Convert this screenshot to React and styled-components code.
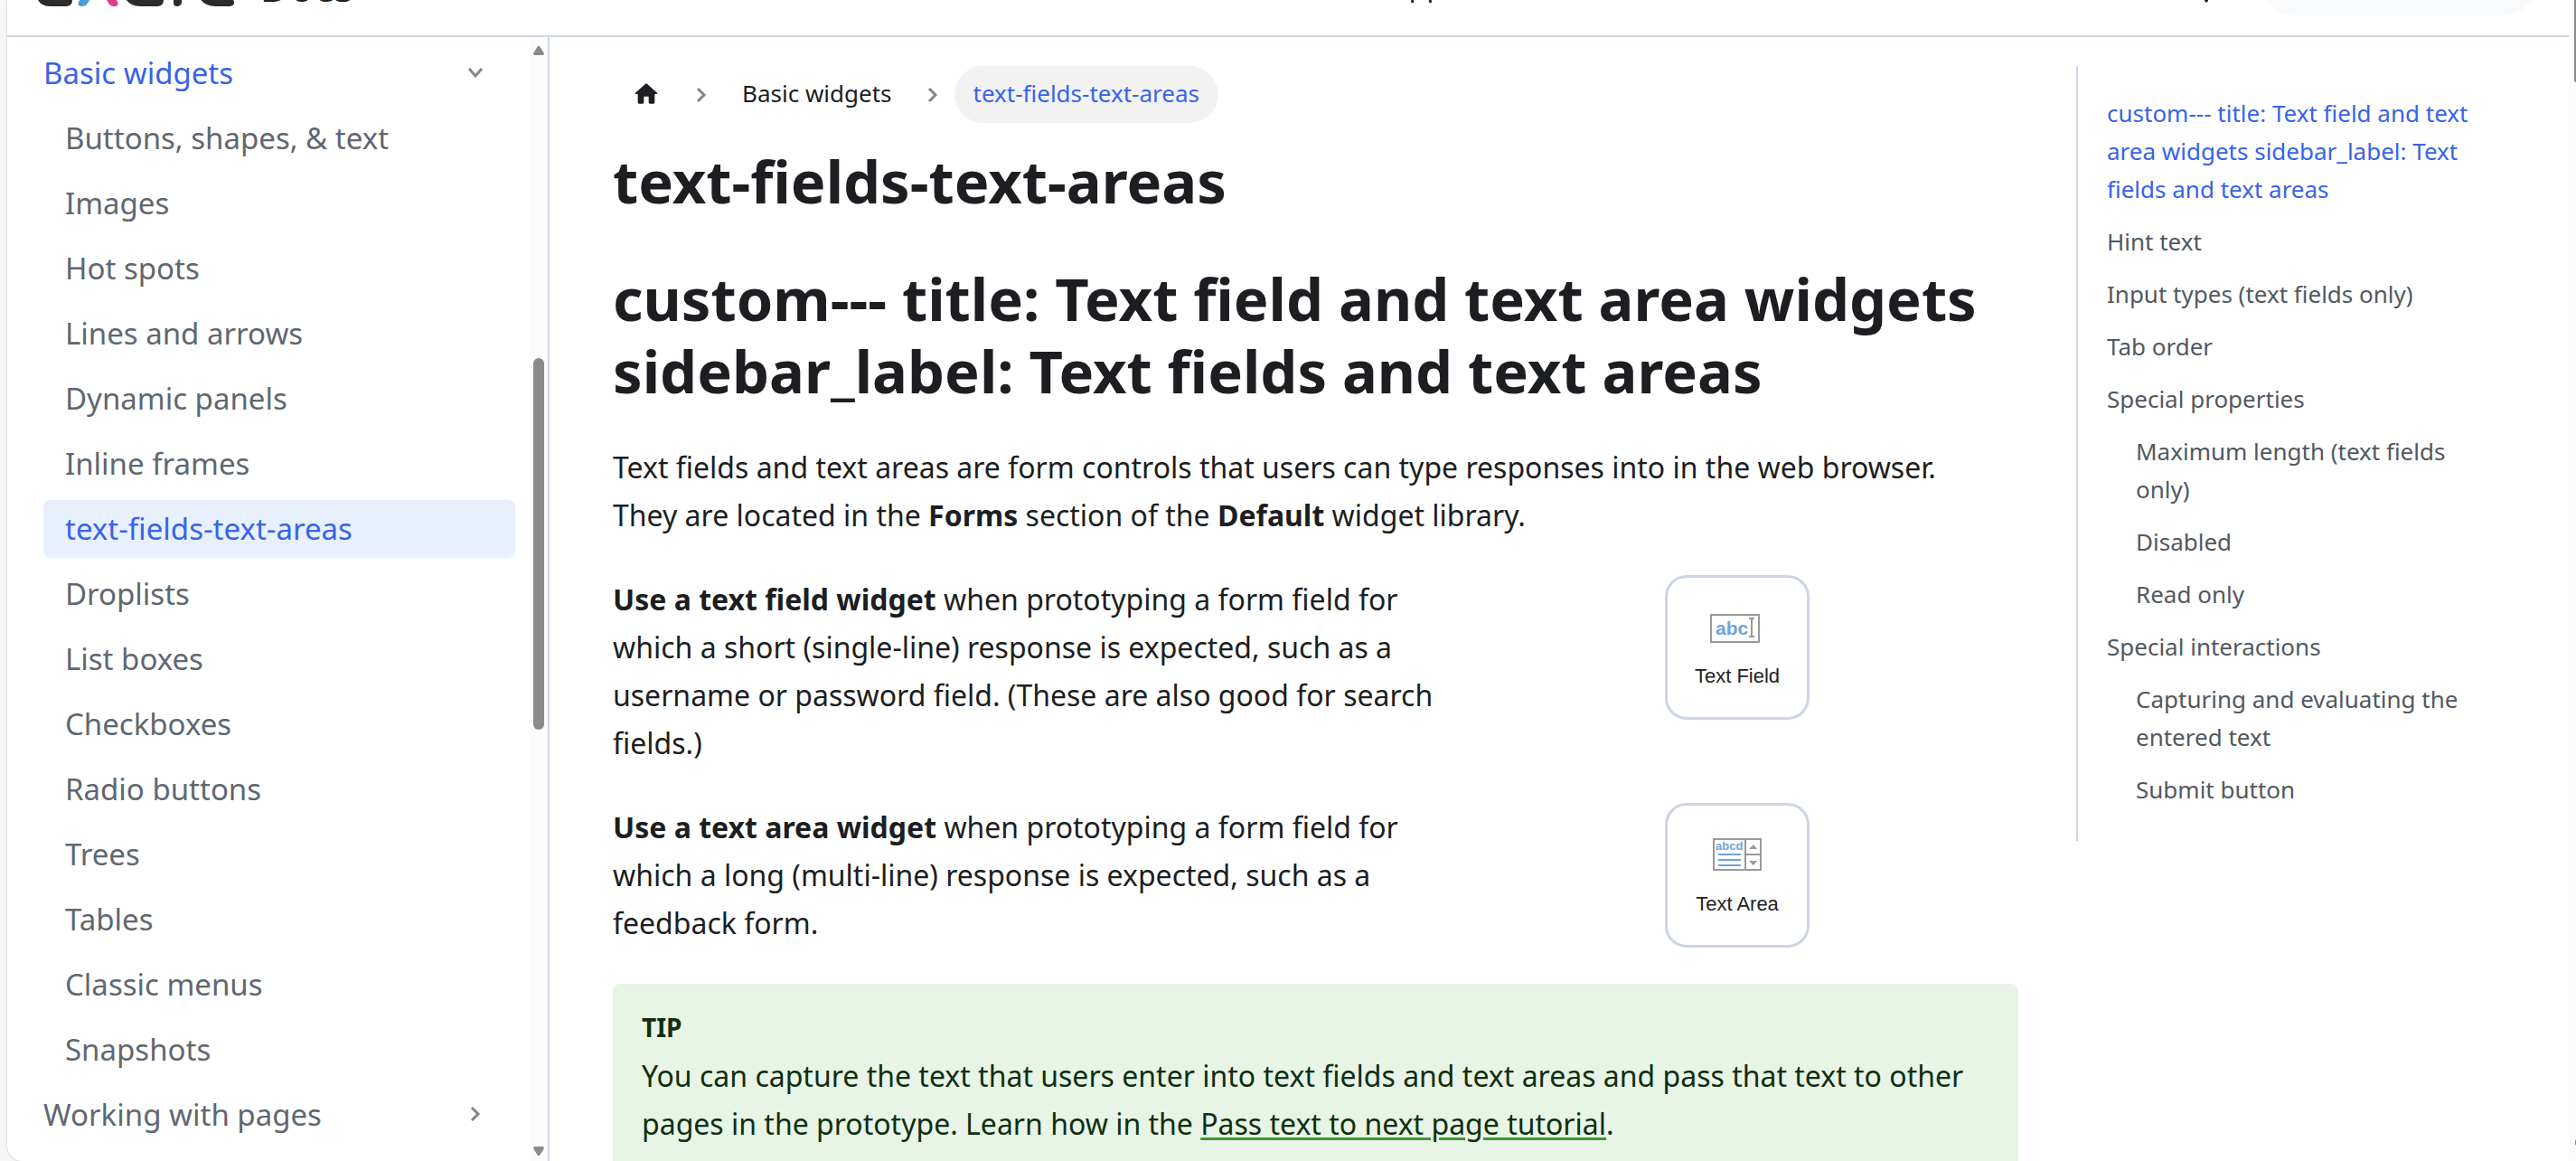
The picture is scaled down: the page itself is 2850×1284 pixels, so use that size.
import React from "react";
import styled, { createGlobalStyle } from "styled-components";

const GlobalStyle = createGlobalStyle`
  * {
    box-sizing: border-box;
  }
  body {
    margin: 0;
    background: #f6f6f7;
    color: #1c1e21;
    font-family: "Noto Sans", "Open Sans", sans-serif;
    font-size: 32px;
    line-height: 53px;
  }
  a {
    color: inherit;
    text-decoration: none;
  }
  h1, p, ul, ol {
    margin: 0;
    padding: 0;
  }
  ul, ol {
    list-style: none;
  }
`;

const Window = styled.div`
  display: flex;
  height: 100vh;
  margin-left: 8px;
  overflow: hidden;
  background: #fff;
  border-bottom-left-radius: 16px;
  box-shadow: 0 0 2px rgba(0, 0, 0, 0.3);
`;

const Page = styled.div`
  flex: 1;
  min-width: 0;
  display: flex;
  flex-direction: column;
`;

const Navbar = styled.header`
  display: flex;
  flex: none;
  align-items: flex-end;
  height: 41px;
  padding: 0 36px 0 32px;
  overflow: hidden;
  border-bottom: 2px solid #cdd5e4;
`;

const Brand = styled.a`
  display: flex;
  align-items: flex-end;
  gap: 26px;
  height: 72px;
  margin-right: 334px;
  padding-bottom: 32px;
`;

const BrandName = styled.span`
  font-size: 44px;
  line-height: 44px;
  font-weight: 600;
`;

const NavLink = styled.a`
  margin-left: auto;
  padding-bottom: 36px;
  line-height: 40px;
`;

const NavTools = styled.div`
  display: flex;
  align-items: flex-end;
  gap: 58px;
  margin-left: auto;
  padding-bottom: 22px;
`;

const IconButton = styled.button`
  display: flex;
  padding: 0 0 14px;
  border: 0;
  background: none;
`;

const Search = styled.input`
  width: 304px;
  height: 72px;
  border: 0;
  border-radius: 36px;
  background: #f8fafc;
`;

const Columns = styled.div`
  flex: 1;
  min-height: 0;
  display: flex;
`;

const Sidebar = styled.nav`
  flex: none;
  display: flex;
  width: 600px;
  border-right: 2px solid #cdd5e4;
`;

const Menu = styled.ul`
  flex: 1;
  display: flex;
  flex-direction: column;
  gap: 8px;
  padding: 8px 16px 8px 40px;
  font-size: 33px;
`;

const MenuItem = styled.li`
  display: flex;
`;

const MenuLink = styled.a`
  flex: 1;
  display: flex;
  align-items: center;
  justify-content: space-between;
  height: 64px;
  padding: 0 33px 2px ${(props) => (props.$sub ? 24 : 0)}px;
  border-radius: 8px;
  color: ${(props) => (props.$active ? "#3763eb" : "#606770")};
  background: ${(props) => (props.$current ? "#e8f0fe" : "transparent")};
`;

const Track = styled.div`
  flex: none;
  display: flex;
  flex-direction: column;
  align-items: center;
  justify-content: space-between;
  width: 20px;
  padding: 10px 0 6px;
  background: #fcfcfc;
`;

const Thumb = styled.div`
  flex: 0 0 411px;
  width: 12px;
  margin-bottom: 126px;
  border-radius: 6px;
  background: #8b8b8b;
`;

const Main = styled.main`
  flex: 1;
  min-width: 0;
  display: flex;
  gap: 64px;
  padding: 32px 0 0 70px;
`;

const Article = styled.article`
  flex: 1;
  min-width: 0;
`;

const Crumbs = styled.ol`
  display: flex;
  align-items: center;
  height: 63px;
  margin-bottom: 24px;
  font-size: 26px;
`;

const Crumb = styled.li`
  display: flex;
  align-items: center;
`;

const CrumbLink = styled.a`
  display: flex;
  align-items: center;
  height: 63px;
  padding: 0 21px 2px;
  border-radius: 32px;
  color: ${(props) => (props.$active ? "#3763eb" : "#1c1e21")};
  background: ${(props) => (props.$active ? "#f2f2f2" : "transparent")};
`;

const Separator = styled.svg`
  width: 12px;
  height: 18px;
  margin: 0 18px;
`;

const Title = styled.h1`
  margin-bottom: ${(props) => (props.$spaced ? 50 : 40)}px;
  font-size: 65px;
  line-height: 80px;
  font-weight: 700;
`;

const Paragraph = styled.p`
  margin-bottom: 40px;
  padding-right: 32px;
`;

const WidgetRow = styled.div`
  display: grid;
  grid-template-columns: 3fr 2fr;
  align-items: start;
  justify-items: start;
  margin-bottom: 40px;
`;

const WidgetCard = styled.figure`
  display: flex;
  flex-direction: column;
  align-items: center;
  justify-self: center;
  gap: 16px;
  width: 160px;
  height: 160px;
  margin: 0;
  padding-top: 32px;
  border: 3px solid #cdd5e4;
  border-radius: 24px;
`;

const CardLabel = styled.figcaption`
  color: #222;
  font-family: "Liberation Sans", Arial, sans-serif;
  font-size: 22px;
  line-height: 42px;
`;

const Tip = styled.aside`
  padding: 22px 32px;
  border-radius: 8px;
  color: #0f2f0f;
  background: #e8f4e6;
`;

const TipTitle = styled.div`
  font-size: 28px;
  font-weight: 700;
`;

const TipLink = styled.a`
  text-decoration: underline 3px #3f962f;
  text-underline-offset: 3px;
`;

const TocColumn = styled.div`
  flex: none;
  width: 545px;
`;

const Toc = styled.ul`
  display: flex;
  flex-direction: column;
  gap: 16px;
  padding: 31px 80px 36px 32px;
  border-left: 2px solid #cdd5e4;
  color: #525860;
  font-size: 26px;
  line-height: 42px;
`;

const TocItem = styled.li`
  padding-left: ${(props) => (props.$sub ? 32 : 0)}px;
  color: ${(props) => (props.$active ? "#3763eb" : "inherit")};
`;

const PageTrack = styled.div`
  flex: none;
  display: flex;
  flex-direction: column;
  justify-content: space-between;
  align-items: flex-end;
  width: 8px;
  background: #fbfbfb;
`;

const PageThumb = styled.div`
  width: 2px;
  height: 91px;
  border-bottom-left-radius: 2px;
  background: #8b8b8b;
`;

const PageArrow = styled.div`
  width: 1px;
  height: 5px;
  margin-bottom: 18px;
  background: #8b8b8b;
`;

const menu = [
  "Buttons, shapes, & text",
  "Images",
  "Hot spots",
  "Lines and arrows",
  "Dynamic panels",
  "Inline frames",
  "text-fields-text-areas",
  "Droplists",
  "List boxes",
  "Checkboxes",
  "Radio buttons",
  "Trees",
  "Tables",
  "Classic menus",
  "Snapshots",
];

const toc = [
  {
    text: "custom--- title: Text field and text area widgets sidebar_label: Text fields and text areas",
    active: true,
  },
  { text: "Hint text" },
  { text: "Input types (text fields only)" },
  { text: "Tab order" },
  { text: "Special properties" },
  { text: "Maximum length (text fields only)", sub: true },
  { text: "Disabled", sub: true },
  { text: "Read only", sub: true },
  { text: "Special interactions" },
  { text: "Capturing and evaluating the entered text", sub: true },
  { text: "Submit button", sub: true },
];

function Logo() {
  return (
    <svg width="222" height="48" viewBox="0 0 222 48" aria-hidden="true">
      <path d="M0 20v16q3 12 15 12h18q7 0 7-7V20z" fill="#2b2b2b" />
      <path d="M47 43l8-13 8-10h10L56 46q-2 2-5 2-6 0-4-5z" fill="#4a9fd9" />
      <path d="M66 20h10l14 23q2 5-4 5-3 0-5-2z" fill="#dd3b8c" />
      <path d="M97 20v16q5 12 18 12h19q7 0 7-7V20z" fill="#2b2b2b" />
      <path d="M152 20v24q0 4 4 4t5-4V20z" fill="#2b2b2b" />
      <path d="M179 20v16q6 12 19 12h15q6 0 6-4 0-4-4-4h-8V20z" fill="#2b2b2b" />
    </svg>
  );
}

function Chevron() {
  return (
    <Separator viewBox="0 0 12 18" fill="none" aria-hidden="true">
      <path d="M2 2l7 7-7 7" stroke="#868686" strokeWidth="3" />
    </Separator>
  );
}

function Arrow({ down }) {
  return (
    <svg width="12" height="10" viewBox="0 0 12 10" aria-hidden="true">
      <path
        d={down ? "M1 0h10l1 2-5 8H5L0 2z" : "M1 10h10l1-2L7 0H5L0 8z"}
        fill="#8b8b8b"
      />
    </svg>
  );
}

function TextFieldIcon() {
  return (
    <svg width="60" height="40" viewBox="0 0 60 40" aria-hidden="true">
      <rect x="1" y="9" width="53" height="30" fill="#fff" stroke="#999" strokeWidth="2" />
      <text x="6" y="31" fill="#6fa3dc" fontFamily="Liberation Sans" fontWeight="700" fontSize="21">
        abc
      </text>
      <path d="M43 13h6M43 33h6M46 13v20" stroke="#999" strokeWidth="2" />
    </svg>
  );
}

function TextAreaIcon() {
  return (
    <svg width="56" height="40" viewBox="0 0 56 40" aria-hidden="true">
      <rect x="2" y="5" width="52" height="34" fill="#fff" stroke="#999" strokeWidth="2" />
      <path d="M37 5v34M37 22h17" stroke="#999" strokeWidth="2" />
      <text x="4" y="17" fill="#6fa3dc" fontFamily="Liberation Sans" fontWeight="700" fontSize="13">
        abcd
      </text>
      <path d="M7 22h25M7 28h25M7 34h25" stroke="#6fa3dc" strokeWidth="2" />
      <path d="M41 16h9l-4-5zM41 29h9l-4 5z" fill="#999" />
    </svg>
  );
}

export default function App() {
  return (
    <>
      <GlobalStyle />
      <Window>
        <Page>
          <Navbar>
            <Brand href="#" aria-label="Axure Docs">
              <Logo />
              <BrandName>Docs</BrandName>
            </Brand>
            <NavLink href="#">Support</NavLink>
            <NavTools>
              <IconButton type="button" aria-label="Theme">
                <svg width="6" height="36" viewBox="0 0 6 36">
                  <path d="M1 20h4v14l-2 2-2-2z" fill="#1c1e21" />
                </svg>
              </IconButton>
              <Search type="search" aria-label="Search" />
            </NavTools>
          </Navbar>
          <Columns>
            <Sidebar>
              <Menu>
                <MenuItem>
                  <MenuLink href="#" $active>
                    Basic widgets
                    <svg width="22" height="18" viewBox="0 0 22 18" fill="none">
                      <path d="M4 5l7 8 7-8" stroke="#868686" strokeWidth="3" />
                    </svg>
                  </MenuLink>
                </MenuItem>
                {menu.map((text) => (
                  <MenuItem key={text}>
                    <MenuLink
                      href="#"
                      $sub
                      $active={text === "text-fields-text-areas"}
                      $current={text === "text-fields-text-areas"}
                    >
                      {text}
                    </MenuLink>
                  </MenuItem>
                ))}
                <MenuItem>
                  <MenuLink href="#">
                    Working with pages
                    <svg width="22" height="18" viewBox="0 0 22 18" fill="none">
                      <path d="M7 2l7 7-7 7" stroke="#868686" strokeWidth="3" />
                    </svg>
                  </MenuLink>
                </MenuItem>
              </Menu>
              <Track>
                <Arrow />
                <Thumb />
                <Arrow down />
              </Track>
            </Sidebar>
            <Main>
              <Article>
                <Crumbs>
                  <Crumb>
                    <CrumbLink href="#" aria-label="Home">
                      <svg width="32" height="32" viewBox="0 0 24 24">
                        <path
                          d="M10 19v-5h4v5c0 .55.45 1 1 1h3c.55 0 1-.45 1-1v-7h1.700c.46 0 .68-.57.33-.87L12.670 3.600c-.38-.34-.96-.34-1.340 0l-8.360 7.530c-.34.3-.13.87.33.87H5v7c0 .55.45 1 1 1h3c.55 0 1-.45 1-1z"
                          fill="#1c1e21"
                        />
                      </svg>
                    </CrumbLink>
                    <Chevron />
                  </Crumb>
                  <Crumb>
                    <CrumbLink href="#">Basic widgets</CrumbLink>
                    <Chevron />
                  </Crumb>
                  <Crumb>
                    <CrumbLink as="span" $active>
                      text-fields-text-areas
                    </CrumbLink>
                  </Crumb>
                </Crumbs>
                <Title $spaced>text-fields-text-areas</Title>
                <Title>
                  custom--- title: Text field and text area widgets sidebar_label:
                  Text fields and text areas
                </Title>
                <Paragraph>
                  Text fields and text areas are form controls that users can type
                  responses into in the web browser. They are located in the{" "}
                  <strong>Forms</strong> section of the <strong>Default</strong>{" "}
                  widget library.
                </Paragraph>
                <WidgetRow>
                  <p>
                    <strong>Use a text field widget</strong> when prototyping a form
                    field for which a short (single-line) response is expected, such
                    as a username or password field. (These are also good for search
                    fields.)
                  </p>
                  <WidgetCard>
                    <TextFieldIcon />
                    <CardLabel>Text Field</CardLabel>
                  </WidgetCard>
                </WidgetRow>
                <WidgetRow>
                  <p>
                    <strong>Use a text area widget</strong> when prototyping a form
                    field for which a long (multi-line) response is expected, such as
                    a feedback form.
                  </p>
                  <WidgetCard>
                    <TextAreaIcon />
                    <CardLabel>Text Area</CardLabel>
                  </WidgetCard>
                </WidgetRow>
                <Tip>
                  <TipTitle>TIP</TipTitle>
                  <p>
                    You can capture the text that users enter into text fields and
                    text areas and pass that text to other pages in the prototype.
                    Learn how in the{" "}
                    <TipLink href="#">Pass text to next page tutorial</TipLink>.
                  </p>
                </Tip>
              </Article>
              <TocColumn>
                <Toc>
                  {toc.map((item) => (
                    <TocItem key={item.text} $sub={item.sub} $active={item.active}>
                      <a href="#">{item.text}</a>
                    </TocItem>
                  ))}
                </Toc>
              </TocColumn>
            </Main>
          </Columns>
        </Page>
        <PageTrack>
          <PageThumb />
          <PageArrow />
        </PageTrack>
      </Window>
    </>
  );
}
